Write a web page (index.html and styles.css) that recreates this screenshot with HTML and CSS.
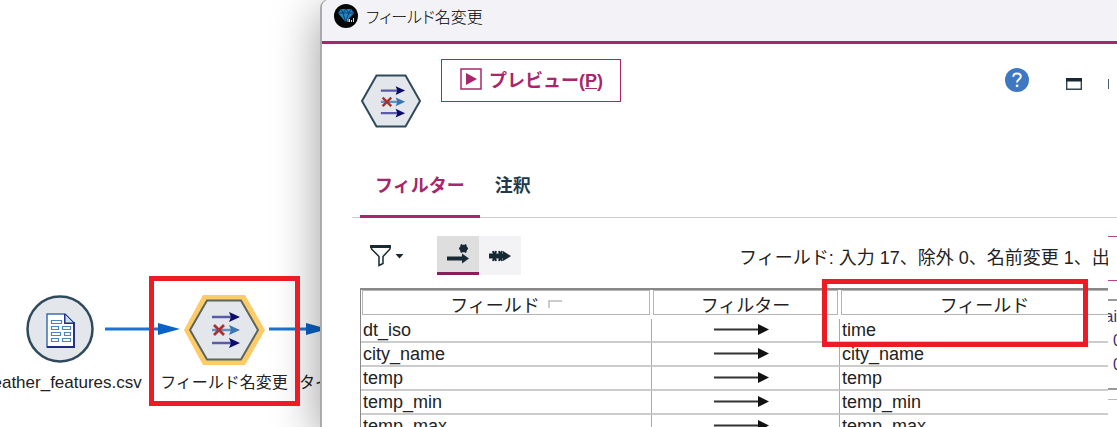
FILE: index.html
```html
<!DOCTYPE html>
<html lang="ja">
<head>
    <meta charset="UTF-8">
    <meta name="viewport" content="width=device-width, initial-scale=1.0">
    <title>フィールド名変更</title>
    <link rel="stylesheet" href="styles.css">
</head>
<body>
    <!-- Shared shapes -->
    <svg class="defs" width="0" height="0">
        <symbol id="filter-arrows" viewBox="0 0 30 32">
            <path d="M1 4h20" stroke="#5a5aa8" stroke-width="2.500"/>
            <path d="M18-1l11 5-11 5 2-5z" fill="#0b0b6b"/>
            <path d="M1 17h20" stroke="#5c93c6" stroke-width="2.500"/>
            <path d="M18 12l11 5-11 5 2-5z" fill="#3b75b0"/>
            <path d="M3 12l10 10M13 12L3 22" stroke="#a83232" stroke-width="2.800"/>
            <path d="M1 30h20" stroke="#5a5aa8" stroke-width="2.500"/>
            <path d="M18 25l11 5-11 5 2-5z" fill="#0b0b6b"/>
        </symbol>
        <symbol id="row-arrow" viewBox="0 0 56 12">
            <path d="M1 5.500h46" stroke="#333" stroke-width="2"/>
            <path d="M45 0l11 5.500-11 5.500z" fill="#111"/>
        </symbol>
    </svg>

    <!-- Stream canvas -->
    <main class="stream">
        <svg class="link link-first" viewBox="0 0 76 14"><path d="M0 7h60" stroke="#1a74d0" stroke-width="3"/><path d="M53 1l22 6-22 6z" fill="#0a62c4"/></svg>
        <svg class="link link-second" viewBox="0 0 76 14"><path d="M0 7h45" stroke="#1a74d0" stroke-width="3"/><path d="M37 1l22 6-22 6z" fill="#0a62c4"/></svg>

        <div class="node node-csv">
            <svg width="68" height="70" viewBox="0 0 68 70">
                <circle cx="33" cy="34" r="32.500" fill="#e3e7eb" stroke="#2f4a5c" stroke-width="2.500"/>
                <path d="M20 19h18l9 9v24H20z" fill="#fff" stroke="#3a70b2" stroke-width="1.500"/>
                <path d="M38 19v9h9v24H20" fill="none" stroke="#1d2c80" stroke-width="1.800"/>
                <path d="M38 19l9 9h-9z" fill="#cfdcf0" stroke="#1d2c80"/>
                <path d="M24.500 25.500h10v3h-10zM24.500 31.500h7v3h-7zM35.500 31.500h8v3h-8zM24.500 37.500h9v3h-9zM37.500 37.500h6v3h-6zM24.500 43.500h7v3h-7zM35.500 43.500h8v3h-8z" fill="#fff" stroke="#4d84bd" stroke-width="1.200"/>
            </svg>
            <span class="node-label">weather_features.csv</span>
        </div>

        <div class="node node-filter">
            <svg width="82" height="70" viewBox="0 0 82 70">
                <path d="M20 0h42l20 35-20 35H20L1 35z" fill="#ffcb66"/>
                <path d="M24 5.500h34L75 35 58 64.500H24L7 35z" fill="#e3e7eb" stroke="#5b6660" stroke-width="2"/>
                <use href="#filter-arrows" x="28" y="18" width="30" height="32"/>
            </svg>
            <span class="node-label">フィールド名変更</span>
        </div>

        <span class="node-label node-next">タイプ</span>
    </main>

    <!-- Node dialog -->
    <section class="dialog">
        <header class="titlebar">
            <svg width="24" height="24" viewBox="0 0 24 24">
                <circle cx="12" cy="12" r="12" fill="#050505"/>
                <path d="M7 5h10l3 4-8.500 9L4 9z" fill="#2484c4"/>
                <path d="M4 9h16M7 5l2 4 3-4 3 4 2-4M9 9l2.500 9L15 9" fill="none" stroke="#0b3f6d"/>
                <path d="M14 18v-3M15.500 15v3M17.500 16v2M19.500 14v4" stroke="#ddd" stroke-width="1"/>
            </svg>
            <h1>フィールド名変更</h1>
        </header>

        <div class="actions">
            <svg class="type-icon" width="60" height="54" viewBox="0 0 60 54">
                <path d="M15.500 1.500h29L59 27 44.500 52.500h-29L1 27z" fill="#e3e7eb" stroke="#2f4a5c" stroke-width="2"/>
                <use href="#filter-arrows" x="19" y="13" width="26" height="28"/>
            </svg>
            <button class="preview" type="button">
                <svg width="22" height="22" viewBox="0 0 22 22"><path d="M1 1h20v20H1z" fill="#fff" stroke="#a9266b" stroke-width="1.500"/><path d="M6 5l11 6-11 6z" fill="#a9266b"/></svg>
                <span>プレビュー(<u>P</u>)</span>
            </button>
            <div class="window-tools">
                <button type="button" aria-label="ヘルプ">
                    <svg width="24" height="24" viewBox="0 0 24 24"><circle cx="12" cy="12" r="12" fill="#3f78c2"/><path d="M8.300 8.700C8.300 4.300 15.800 4.500 15.800 8.500c0 2.800-3.700 2.800-3.700 6" fill="none" stroke="#fff" stroke-width="2"/><circle cx="12.100" cy="17.800" r="1.400" fill="#fff"/></svg>
                </button>
                <button class="maximize" type="button" aria-label="最大化">
                    <svg width="16" height="12" viewBox="0 0 16 12"><path d="M.7.700h14.600v10.600H.7z" fill="#fff" stroke="#33464f" stroke-width="1.400"/><path d="M0 0h16v3.500H0z" fill="#172a33"/></svg>
                </button>
                <button type="button" aria-label="閉じる">
                    <svg width="8" height="12" viewBox="0 0 8 12"><path d="M.5 1v10" stroke="#4c606b"/></svg>
                </button>
            </div>
        </div>

        <nav class="tabs">
            <a class="tab active" href="#filter">フィルター</a>
            <a class="tab" href="#notes">注釈</a>
        </nav>

        <div class="toolbar">
            <button class="funnel" type="button" aria-label="フィルターオプション">
                <svg width="34" height="22" viewBox="0 0 34 22"><path d="M1.500 2h18.500v2l-7 7.500v7l-4 2v-9L1.500 4z" fill="#fff" stroke="#172a33" stroke-width="1.500"/><path d="M0 0h21v3H0z" fill="#172a33"/><path d="M25.500 9h8l-4 4.500z" fill="#172a33"/></svg>
            </button>
            <div class="toggles">
                <button class="toggle active" type="button" aria-label="現在のフィールド">
                    <svg width="22" height="20" viewBox="0 0 22 20"><path d="M0 14.500h16" stroke="#172a33" stroke-width="4"/><path d="M15 9.500l7 5-7 5z" fill="#172a33"/><path d="M12 4.500h9M14 .5l5 8M19 .5l-5 8" stroke="#172a33" stroke-width="2"/><circle cx="16.500" cy="4.500" r="3.800" fill="#172a33"/></svg>
                </button>
                <button class="toggle" type="button" aria-label="未使用のフィールド">
                    <svg width="22" height="12" viewBox="0 0 22 12"><path d="M0 6h16" stroke="#172a33" stroke-width="5"/><path d="M14 1l8 5-8 5z" fill="#172a33"/><path d="M4 1l3 10M7 1L4 11M10 1l3 10M13 1l-3 10" stroke="#172a33" stroke-width="2"/></svg>
                </button>
            </div>
            <p class="summary">フィールド: 入力 17、除外 0、名前変更 1、出力 17</p>
        </div>

        <table class="fields">
            <thead>
                <tr>
                    <th class="col-source"><div>フィールド<svg width="14" height="8" viewBox="0 0 14 8"><path d="M1 8V1h13" fill="none" stroke="#bbb" stroke-width="1.500"/></svg></div></th>
                    <th class="col-filter"><div>フィルター</div></th>
                    <th><div>フィールド</div></th>
                </tr>
            </thead>
            <tbody>
                <tr><td>dt_iso</td><td class="arrow"><svg><use href="#row-arrow"/></svg></td><td>time</td></tr>
                <tr><td>city_name</td><td class="arrow"><svg><use href="#row-arrow"/></svg></td><td>city_name</td></tr>
                <tr><td>temp</td><td class="arrow"><svg><use href="#row-arrow"/></svg></td><td>temp</td></tr>
                <tr><td>temp_min</td><td class="arrow"><svg><use href="#row-arrow"/></svg></td><td>temp_min</td></tr>
                <tr><td>temp_max</td><td class="arrow"><svg><use href="#row-arrow"/></svg></td><td>temp_max</td></tr>
            </tbody>
        </table>

        <!-- Edge of the window lying over the dialog -->
        <aside class="edge">
            <div class="edge-button"></div>
            <div class="edge-list">
                <span>ai</span>
                <span class="value">0</span>
                <span class="value">0</span>
            </div>
            <div class="edge-foot"></div>
        </aside>
    </section>

    <!-- Highlight frames -->
    <div class="mark mark-node"></div>
    <div class="mark mark-field"></div>
</body>
</html>
```
FILE: styles.css
```css
* {
    box-sizing: border-box;
}

body {
    margin: 0;
    height: 100vh;
    position: relative;
    overflow: hidden;
    background: #fff;
    color: #222;
    font-family: "Liberation Sans", "Noto Sans CJK JP", sans-serif;
    font-size: 18px;
}

button {
    padding: 0;
    border: 0;
    background: none;
    font: inherit;
    color: inherit;
    cursor: pointer;
}

svg {
    display: block;
    flex: none;
    overflow: visible;
}

symbol {
    overflow: visible;
}

.defs {
    position: absolute;
}

/* Stream canvas */
.node {
    position: absolute;
    top: 295px;
    width: 164px;
    display: flex;
    flex-direction: column;
    align-items: center;
    gap: 6px;
}

.node-csv {
    left: -21px;
}

.node-csv .node-label {
    font-size: 17px;
}

.node-filter {
    left: 142px;
}

.node-label {
    font-size: 16px;
    line-height: 24px;
    white-space: nowrap;
}

.node-next {
    position: absolute;
    left: 299px;
    top: 371px;
}

.link {
    position: absolute;
    top: 322px;
    width: 76px;
    height: 14px;
}

.link-first {
    left: 105px;
}

.link-second {
    left: 269px;
}

/* Dialog */
.dialog {
    position: absolute;
    left: 320px;
    right: 0;
    top: -1px;
    bottom: 0;
    overflow: hidden;
    border-left: 2px solid #aaa;
    border-top: 1px solid #bbb;
    border-top-left-radius: 9px;
    background: #fff;
    box-shadow: 0 12px 48px rgba(0, 0, 0, 0.4);
}

.titlebar {
    display: flex;
    align-items: center;
    gap: 8px;
    height: 44px;
    padding: 0 12px 9px;
    background: #f3f2f6;
    border-bottom: 3px solid #a9266b;
}

.titlebar h1 {
    margin: 0;
    font-family: "Noto Sans CJK JP", sans-serif;
    font-size: 16px;
    font-weight: 300;
    font-feature-settings: "palt";
    color: #000;
}

.actions {
    display: flex;
    align-items: flex-start;
    height: 115px;
    padding: 15px 0 0 39px;
}

.type-icon {
    margin-top: 15px;
}

.preview {
    display: flex;
    align-items: center;
    gap: 7px;
    height: 43px;
    margin-left: 20px;
    padding: 0 17px 4px 18px;
    border: 1px solid #a9266b;
    color: #a9266b;
    font-weight: bold;
}

.window-tools {
    display: flex;
    align-items: center;
    gap: 37px;
    margin: 9px 1px 0 auto;
}

.maximize {
    padding-top: 8px;
}

.window-tools button:last-child {
    margin-left: -11px;
    padding-top: 8px;
}

.tabs {
    display: flex;
    height: 59px;
    margin-left: 30px;
    padding-left: 8px;
    border-bottom: 1px solid #ccc;
}

.tab {
    height: 59px;
    padding: 14px 15px 0;
    line-height: 26px;
    color: #22394a;
    font-weight: bold;
    text-decoration: none;
}

.tab.active {
    color: #a9266b;
    border-bottom: 3px solid #a9266b;
}

.toolbar {
    display: flex;
    align-items: center;
    height: 39px;
    margin: 18px 0 13px;
    padding-left: 48px;
}

.toggles {
    display: flex;
    margin-left: 33px;
    background: #f3f3f5;
}

.toggle {
    display: flex;
    align-items: center;
    justify-content: center;
    width: 42px;
    height: 39px;
}

.toggle.active {
    background: #dedede;
    border-bottom: 3px solid #86205a;
}

.summary {
    margin: 0 0 0 218px;
    white-space: nowrap;
}

/* Field table, its last column runs on under the edge */
.fields {
    width: calc(100% - 25px);
    margin-left: 38px;
    table-layout: fixed;
    border-collapse: separate;
    border-spacing: 0;
    border-top: 2px solid #888;
    border-left: 1px solid #888;
}

.col-source {
    width: 291px;
}

.col-filter {
    width: 188px;
}

.fields th {
    height: 29px;
    padding: 0 2px 4px 1px;
    font-weight: normal;
}

.fields th div {
    display: flex;
    align-items: center;
    justify-content: center;
    gap: 8px;
    height: 25px;
    padding-top: 3px;
    border: 1px solid #b5b5b5;
}

.fields td {
    height: 24px;
    padding: 0 2px;
    line-height: 22px;
    border-right: 1px solid #aaa;
    border-bottom: 2px solid #ccc;
}

.fields .arrow {
    padding-right: 12px;
}

.arrow svg {
    width: 56px;
    height: 12px;
    margin: 0 auto;
}

/* Window edge on the right */
.edge {
    position: absolute;
    right: 0;
    top: 219px;
    bottom: 0;
    width: 9px;
    padding-top: 17px;
    overflow: hidden;
    background: #fff;
    font-size: 16px;
}

.edge-button {
    height: 45px;
    border: solid #b84586;
    border-width: 1px 0;
}

.edge-list {
    display: flex;
    flex-direction: column;
    align-items: flex-end;
    height: 91px;
    margin-top: 18px;
    padding-top: 4px;
    border-top: 2px solid #999;
    border-bottom: 2px solid #999;
    line-height: 24px;
    color: #443064;
}

.edge-list .value {
    margin-right: -5px;
}

.edge-foot {
    height: 30px;
    margin-top: 9px;
    border-top: 1px solid #bbb;
}

/* Highlight frames */
.mark {
    position: absolute;
    border: 5px solid #ed1c24;
    pointer-events: none;
}

.mark-node {
    left: 149px;
    top: 276px;
    width: 151px;
    height: 130px;
}

.mark-field {
    left: 822px;
    top: 279px;
    width: 266px;
    height: 68px;
}
```
